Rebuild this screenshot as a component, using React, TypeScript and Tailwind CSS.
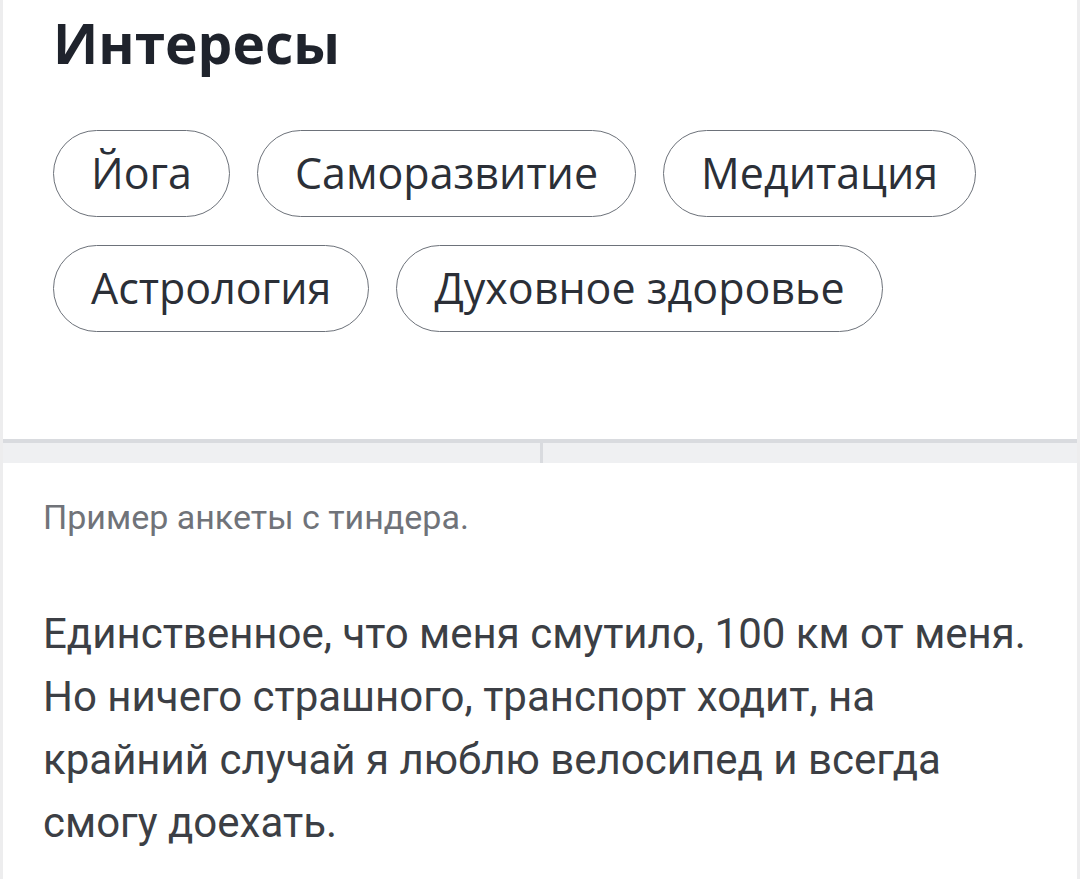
import React from 'react';

const interests = [
  ['Йога', 'Саморазвитие', 'Медитация'],
  ['Астрология', 'Духовное здоровье'],
];

const Chip: React.FC<{ label: string }> = ({ label }) => (
  <div className="flex h-[87px] items-center rounded-full border-[1.5px] border-[#6d727a] px-[37px] text-[43px] text-[#2b2f37]">
    {label}
  </div>
);

export default function App() {
  return (
    <div className="flex h-[879px] w-[1080px] flex-col overflow-hidden border-l-[3px] border-r-[3px] border-[#ededee] bg-white">
      {/* скриншот анкеты */}
      <div className="h-[439px] pl-[50px] pt-[12px] font-['Open_Sans',sans-serif]">
        <h2 className="text-[55px] font-bold leading-[62px] text-[#1f232c]">Интересы</h2>
        <div className="mt-[56px] flex flex-col gap-[28px]">
          {interests.map((row, i) => (
            <div key={i} className="flex gap-[27px]">
              {row.map((item) => (
                <Chip key={item} label={item} />
              ))}
            </div>
          ))}
        </div>
      </div>

      <div className="h-[4px] bg-[#d9dbdf]" />
      <div className="flex h-[20px] bg-[#eff0f2]">
        <div className="w-[537px]" />
        <div className="w-[3px] bg-[#d9dbdf]" />
      </div>

      <div className="pl-[40px] pr-[35px] pt-[34px] font-['Roboto',sans-serif]">
        <p className="text-[34px] leading-[40px] text-[#707379]">Пример анкеты с тиндера.</p>
        <p className="mt-[65px] text-[42px] leading-[63px] text-[#3c3f45]">
          Единственное, что меня смутило, 100 км от меня. Но ничего страшного, транспорт ходит, на
          крайний случай я люблю велосипед и всегда смогу доехать.
        </p>
      </div>
    </div>
  );
}
